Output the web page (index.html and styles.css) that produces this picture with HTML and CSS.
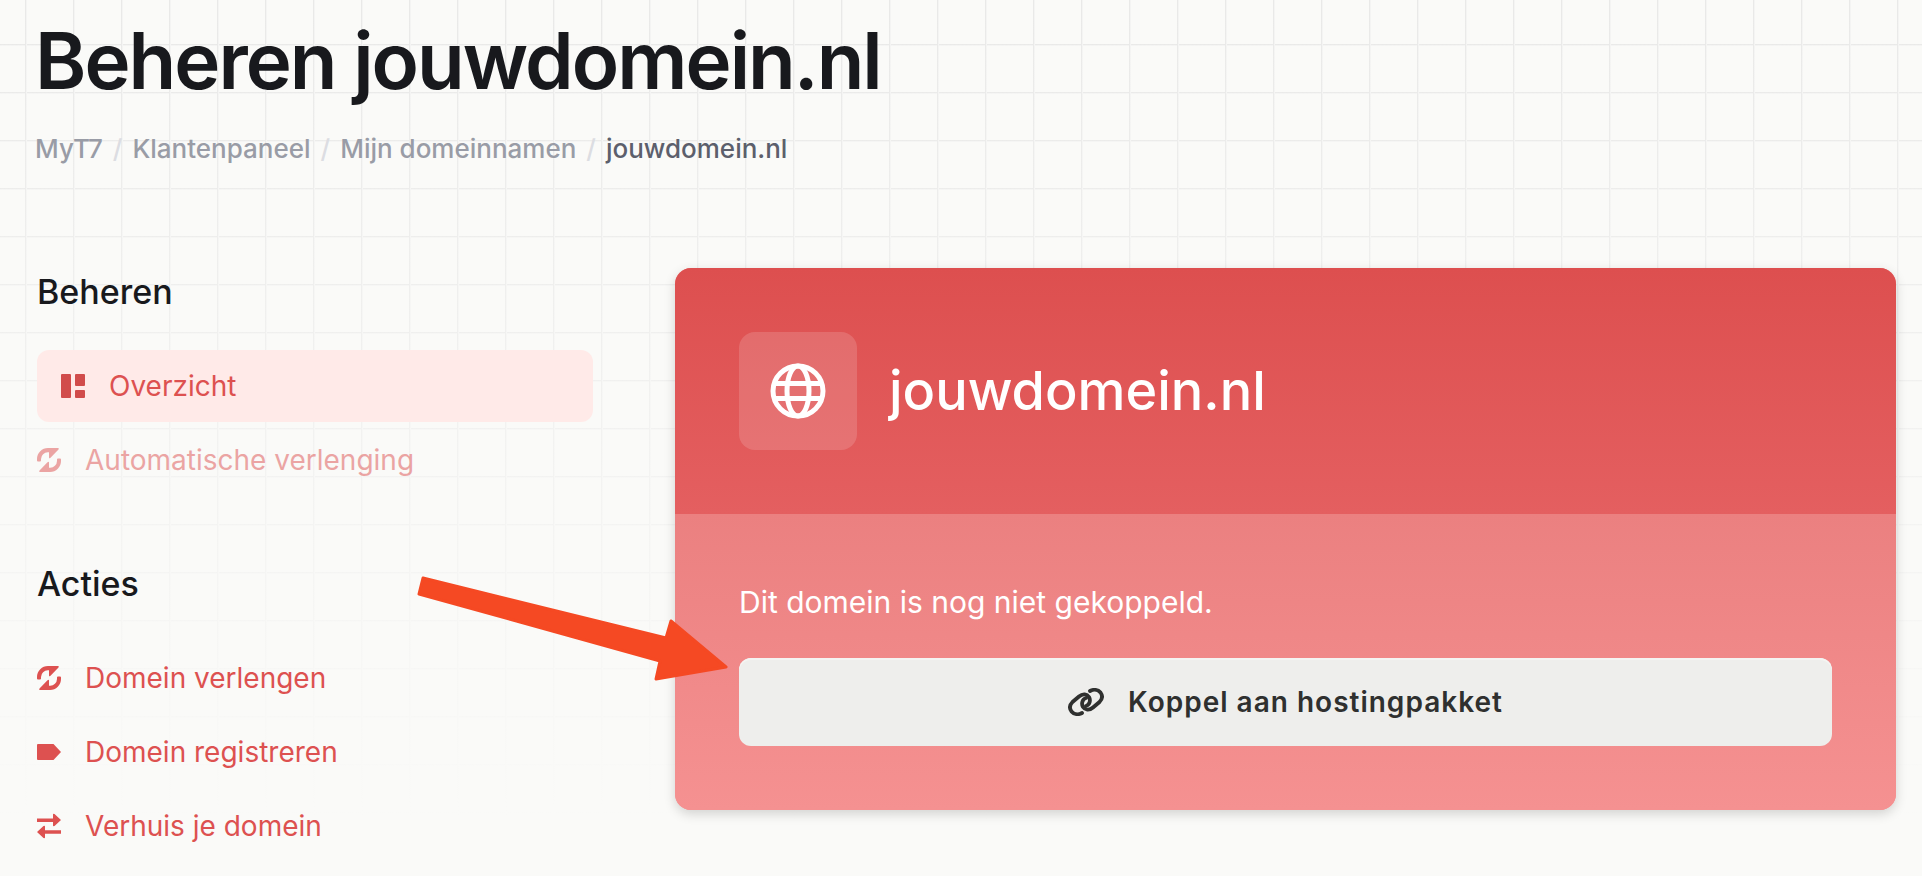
FILE: index.html
```html
<!DOCTYPE html>
<html lang="nl">
<head>
<meta charset="utf-8">
<title>Beheren jouwdomein.nl</title>
<link rel="stylesheet" href="styles.css">
</head>
<body>
<svg class="sprite" aria-hidden="true">
  <symbol id="i-renew" viewBox="0 0 24 24">
    <g fill="currentColor">
      <path id="renew-half" d="M0 12.500V11A11 11 0 0 1 11 0H21Q22.500 0 21.500 1.500L13.500 9.700Q12 11 12 9.300V4.300H11A6.800 6.800 0 0 0 4 11V12.500Q4 13.500 3 13.500H1Q0 13.500 0 12.500Z"/>
      <use href="#renew-half" transform="rotate(180 12 12)"/>
    </g>
  </symbol>
</svg>
<main class="page">
  <header class="page-header">
    <h1 class="page-title">Beheren jouwdomein.nl</h1>
    <nav aria-label="Kruimelpad">
      <ol class="breadcrumb">
        <li><a href="#">MyT7</a></li>
        <li><a href="#">Klantenpaneel</a></li>
        <li><a href="#">Mijn domeinnamen</a></li>
        <li><a class="current" href="#" aria-current="page">jouwdomein.nl</a></li>
      </ol>
    </nav>
  </header>
  <div class="columns">
    <aside class="sidebar">
      <nav class="menu" aria-labelledby="menu-manage">
        <h2 class="menu-title" id="menu-manage">Beheren</h2>
        <ul class="menu-list">
          <li><a class="menu-link active" href="#">
            <svg class="icon" viewBox="0 0 24 24" fill="currentColor"><rect width="10" height="24" rx="1"/><rect x="14" width="10" height="12" rx="1"/><rect x="14" y="16" width="10" height="8" rx="1"/></svg>
            Overzicht</a></li>
          <li><a class="menu-link muted" href="#"><svg class="icon"><use href="#i-renew"/></svg>Automatische verlenging</a></li>
        </ul>
      </nav>
      <nav class="menu" aria-labelledby="menu-actions">
        <h2 class="menu-title" id="menu-actions">Acties</h2>
        <ul class="menu-list">
          <li><a class="menu-link" href="#"><svg class="icon"><use href="#i-renew"/></svg>Domein verlengen</a></li>
          <li><a class="menu-link" href="#">
            <svg class="icon" viewBox="0 0 24 24" fill="currentColor"><path d="M1 4H16.500L24 12L16.500 20H1Q0 20 0 19V5Q0 4 1 4Z"/></svg>
            Domein registreren</a></li>
          <li><a class="menu-link" href="#">
            <svg class="icon" viewBox="0 0 24 24" fill="currentColor"><path d="M0 4.500H16V0.500Q16 -0.500 17.500 0L24 6L17.500 12Q16 12.500 16 11.500V8H0ZM24 16.200H8V12.500Q8 11.500 6.500 12L0 18L6.500 24Q8 24.500 8 23.500V19.700H24Z"/></svg>
            Verhuis je domein</a></li>
        </ul>
      </nav>
    </aside>
    <section class="card">
      <div class="card-head">
        <div class="tile">
          <svg class="globe" viewBox="0 0 56 56" fill="none" stroke="#fff" stroke-width="5"><circle cx="28" cy="28" r="25"/><ellipse cx="28" cy="28" rx="11" ry="25"/><path d="M5 20.500H51M5 35.500H51"/></svg>
        </div>
        <h2 class="card-title">jouwdomein.nl</h2>
      </div>
      <div class="card-body">
        <p class="card-text">Dit domein is nog niet gekoppeld.</p>
        <button class="button" type="button">
          <svg class="link-icon" viewBox="0 0 36 28" fill="none" stroke="currentColor" stroke-width="3.800" stroke-linecap="round"><path d="M14 25C10.500 27 6 26.500 3.500 23.500C1 20 1.500 17 4.500 14L11 8.500C15 5 19 6 21 9C23 12.500 21.500 17 18 18"/><path d="M22 3C25.500 1 30 1.500 32.500 4.500C35 8 34.500 11 31.500 14L25 19.500C21 23 17 22 15 19C13 15.500 14.500 11 18 10"/></svg>
          Koppel aan hostingpakket</button>
      </div>
      <svg class="arrow" viewBox="0 0 312 106" fill="#f54923" stroke="#f54923" stroke-width="3" stroke-linejoin="round" aria-hidden="true"><path d="M6 3L249 63L254 46L309 92L239 104L243 86L2 19Z"/></svg>
    </section>
  </div>
</main>
</body>
</html>
```
FILE: styles.css
```css
* { box-sizing: border-box; }
body {
  margin: 0;
  min-height: 100vh;
  background-color: #fafaf8;
  background-image:
    linear-gradient(to bottom, rgba(250, 250, 248, 0) 0, #fafaf8 820px),
    linear-gradient(to right, #e9e9e8 1px, #f4f4f3 1px, #f4f4f3 2px, transparent 2px),
    linear-gradient(to bottom, #e9e9e8 1px, #f4f4f3 1px, #f4f4f3 2px, transparent 2px);
  background-size: auto, 48px 48px, 48px 48px;
  background-position: 0 0, 25px 44px, 25px 44px;
  font-family: Inter, "Liberation Sans", sans-serif;
  font-size: 28px;
  color: #18191d;
}
h1, h2, p, ul, ol { margin: 0; padding: 0; font-weight: inherit; }
ul, ol { list-style: none; }
a { color: inherit; text-decoration: none; }
.sprite { position: absolute; width: 0; height: 0; }
.page { padding: 11px 26px 12px 35px; }
.page-title { font-size: 78px; line-height: 100px; font-weight: 600; letter-spacing: -2px; }
.breadcrumb { display: flex; margin-top: 22px; font-size: 26px; line-height: 32px; font-weight: 500; color: #999ca6; }
.breadcrumb li + li::before { content: "/"; padding: 0 10px; color: #dcdde2; }
.breadcrumb .current { color: #5c5f6c; }
.columns { display: grid; grid-template-columns: 556fr 1221fr; gap: 82px; align-items: start; margin-top: 103px; padding-left: 2px; }
.sidebar { display: grid; gap: 64px; }
.menu-title { font-size: 34px; line-height: 48px; font-weight: 500; }
.menu-list { display: grid; gap: 2px; margin-top: 34px; }
.menu-link { display: flex; align-items: center; gap: 24px; height: 72px; color: #dd5150; }
.menu-link.active { padding: 0 24px; border-radius: 12px; background: #ffeae8; }
.menu-link.active .icon { color: #d14c4b; }
.menu-link.muted { opacity: 0.5; }
.icon { width: 24px; height: 24px; flex: none; overflow: visible; }
.card { position: relative; border-radius: 16px; background: #f59191; box-shadow: 0 4px 12px rgba(0, 0, 0, 0.16); color: #fff; }
.card-head { display: flex; align-items: center; gap: 32px; padding: 64px; border-radius: 16px 16px 0 0; background: linear-gradient(#dd4f4f, #e45f60); }
.tile { display: grid; place-items: center; width: 118px; height: 118px; border-radius: 16px; background: rgba(255, 255, 255, 0.15); }
.globe { width: 56px; height: 56px; }
.card-title { font-size: 54px; line-height: 64px; font-weight: 500; }
.card-body { padding: 64px; border-radius: 0 0 16px 16px; background: linear-gradient(#eb8080, #f59191); }
.card-text { font-size: 30px; line-height: 48px; }
.button { display: flex; align-items: center; justify-content: center; gap: 24px; width: 100%; height: 88px; margin-top: 32px; border: 0; border-radius: 12px; background: #eeeeec; box-shadow: inset 0 2px #f4f4f2; color: #2f302f; font: 600 28px/40px Inter, "Liberation Sans", sans-serif; letter-spacing: 1px; }
.link-icon { width: 36px; height: 28px; }
.arrow { position: absolute; left: -258px; top: 307px; width: 312px; height: 106px; overflow: visible; }
```
